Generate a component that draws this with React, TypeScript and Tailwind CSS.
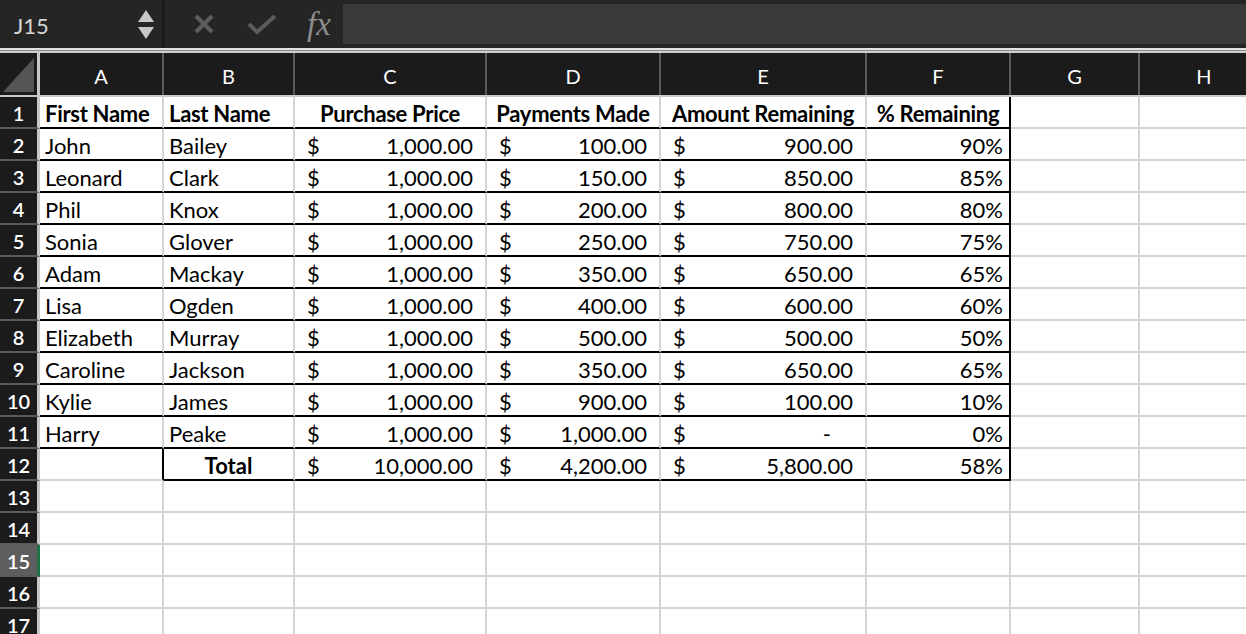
import React from 'react'

const font = { fontFamily: 'Lato, "Open Sans", sans-serif' }

// column widths in px, including the 2px right border
const COLS = [
  { key: 'A', w: 'w-[124px]' },
  { key: 'B', w: 'w-[131px]' },
  { key: 'C', w: 'w-[192px]' },
  { key: 'D', w: 'w-[174px]' },
  { key: 'E', w: 'w-[206px]' },
  { key: 'F', w: 'w-[144px]' },
  { key: 'G', w: 'w-[129px]' },
  { key: 'H', w: 'w-[130px]' },
]

const people = [
  ['John', 'Bailey', '100.00', '900.00', '90%'],
  ['Leonard', 'Clark', '150.00', '850.00', '85%'],
  ['Phil', 'Knox', '200.00', '800.00', '80%'],
  ['Sonia', 'Glover', '250.00', '750.00', '75%'],
  ['Adam', 'Mackay', '350.00', '650.00', '65%'],
  ['Lisa', 'Ogden', '400.00', '600.00', '60%'],
  ['Elizabeth', 'Murray', '500.00', '500.00', '50%'],
  ['Caroline', 'Jackson', '350.00', '650.00', '65%'],
  ['Kylie', 'James', '900.00', '100.00', '10%'],
  ['Harry', 'Peake', '1,000.00', '-', '0%'],
]

function Money({ value, dash }: { value: string; dash?: boolean }) {
  return (
    <div className="flex w-full items-center justify-between pl-[12px] pr-[12px]">
      <span>$</span>
      <span className={dash ? 'pr-[22px]' : ''}>{value}</span>
    </div>
  )
}

function RowHeader({ n, active }: { n: number; active?: boolean }) {
  return (
    <div
      className={`flex h-[32px] w-[40px] shrink-0 items-center justify-center border-b-2 border-r-[3px] border-b-[#5a5a5a] pt-[2px] text-[20px] font-semibold text-white ${
        active ? 'bg-[#5e5e5e] border-r-[#1f7244]' : 'bg-[#1b1b1b] border-r-[#c8c8c8]'
      }`}
    >
      {n}
    </div>
  )
}

type Cell = { content?: React.ReactNode; right?: 'black' | 'gray'; bottom?: 'black' | 'gray'; cls?: string }

function Row({ n, cells, active }: { n: number; cells: Cell[]; active?: boolean }) {
  return (
    <div className="flex">
      <RowHeader n={n} active={active} />
      {COLS.map((c, i) => {
        const cell = cells[i] || {}
        return (
          <div
            key={c.key}
            className={`flex h-[32px] shrink-0 items-center overflow-hidden whitespace-nowrap border-b-2 border-r-2 pt-[3px] text-[22px] leading-none text-black ${c.w} ${
              cell.right === 'black' ? 'border-r-black' : 'border-r-[#d4d4d4]'
            } ${cell.bottom === 'black' ? 'border-b-black' : 'border-b-[#d4d4d4]'} ${cell.cls || ''}`}
          >
            {cell.content}
          </div>
        )
      })}
    </div>
  )
}

export default function App() {
  const headerCells: Cell[] = [
    { content: <span className="pl-[5px]">First Name</span>, bottom: 'black', cls: 'font-bold tracking-[-0.3px]' },
    { content: <span className="pl-[5px]">Last Name</span>, bottom: 'black', cls: 'font-bold tracking-[-0.3px]' },
    { content: 'Purchase Price', bottom: 'black', cls: 'font-bold justify-center tracking-[-0.3px]' },
    { content: 'Payments Made', bottom: 'black', cls: 'font-bold justify-center tracking-[-0.3px]' },
    { content: 'Amount Remaining', bottom: 'black', cls: 'font-bold justify-center tracking-[-0.3px]' },
    { content: '% Remaining', bottom: 'black', right: 'black', cls: 'font-bold justify-center tracking-[-0.3px]' },
  ]

  const totalCells: Cell[] = [
    { right: 'black' },
    { content: 'Total', bottom: 'black', cls: 'font-bold justify-center' },
    { content: <Money value="10,000.00" />, bottom: 'black' },
    { content: <Money value="4,200.00" />, bottom: 'black' },
    { content: <Money value="5,800.00" />, bottom: 'black' },
    { content: <span className="w-full pr-[6px] text-right">58%</span>, bottom: 'black', right: 'black' },
  ]

  return (
    <div className="h-[634px] w-[1246px] overflow-hidden bg-white" style={font}>
      {/* formula bar */}
      <div className="flex h-[48px] items-stretch bg-[#252525]">
        <div className="flex w-[162px] items-center justify-between pl-[14px] pr-[8px]">
          <span className="pt-[3px] text-[22px] text-[#d6d6d6]">J15</span>
          <div className="flex flex-col items-center gap-[5px]">
            <svg width="16" height="12" viewBox="0 0 16 12">
              <path d="M8 0 L16 12 L0 12 Z" fill="#c8c8c8" />
            </svg>
            <svg width="16" height="12" viewBox="0 0 16 12">
              <path d="M0 0 L16 0 L8 12 Z" fill="#c8c8c8" />
            </svg>
          </div>
        </div>
        <div className="w-[3px] bg-[#1a1a1a]" />
        <div className="flex items-center">
          <svg width="22" height="22" viewBox="0 0 22 22" className="ml-[28px]">
            <path d="M3 3 L19 19 M19 3 L3 19" stroke="#5c5c5c" strokeWidth="4" />
          </svg>
          <svg width="30" height="22" viewBox="0 0 30 22" className="ml-[32px]">
            <path d="M2 11 L10 19 L28 3" stroke="#5c5c5c" strokeWidth="4" fill="none" />
          </svg>
          <span
            className="ml-[30px] text-[33px] italic leading-none text-[#8c8c8c]"
            style={{ fontFamily: '"Liberation Serif", "DejaVu Serif", serif' }}
          >
            fx
          </span>
        </div>
        <div className="my-[4px] ml-[12px] flex-1 bg-[#3a3a3a]" />
      </div>
      <div className="h-[5px] border-t-2 border-b-2 border-t-[#e0e0e0] border-b-[#cfcfcf] bg-[#8a8a8a]" />

      {/* column headers */}
      <div className="flex h-[44px] border-b-2 border-b-[#c8c8c8] bg-[#1b1b1b]">
        <div className="relative w-[40px] shrink-0 border-r-[3px] border-r-[#c8c8c8]">
          <svg width="32" height="34" viewBox="0 0 32 34" className="absolute left-[3px] top-[5px]">
            <path d="M31 0 L31 34 L0 34 Z" fill="#555555" />
          </svg>
        </div>
        {COLS.map((c) => (
          <div
            key={c.key}
            className={`flex shrink-0 items-center justify-center border-r-2 border-r-[#5a5a5a] pt-[3px] text-[20px] text-white ${c.w}`}
          >
            {c.key}
          </div>
        ))}
      </div>

      <Row n={1} cells={headerCells} />
      {people.map((p, i) => (
        <Row
          key={p[0]}
          n={i + 2}
          cells={[
            { content: <span className="pl-[5px]">{p[0]}</span>, bottom: 'black' },
            { content: <span className="pl-[5px]">{p[1]}</span>, bottom: 'black' },
            { content: <Money value="1,000.00" />, bottom: 'black' },
            { content: <Money value={p[2]} />, bottom: 'black' },
            { content: <Money value={p[3]} dash={p[3] === '-'} />, bottom: 'black' },
            { content: <span className="w-full pr-[6px] text-right">{p[4]}</span>, bottom: 'black', right: 'black' },
          ]}
        />
      ))}
      <Row n={12} cells={totalCells} />
      <Row n={13} cells={[]} />
      <Row n={14} cells={[]} />
      <Row n={15} cells={[]} active />
      <Row n={16} cells={[]} />
      <Row n={17} cells={[]} />
    </div>
  )
}
